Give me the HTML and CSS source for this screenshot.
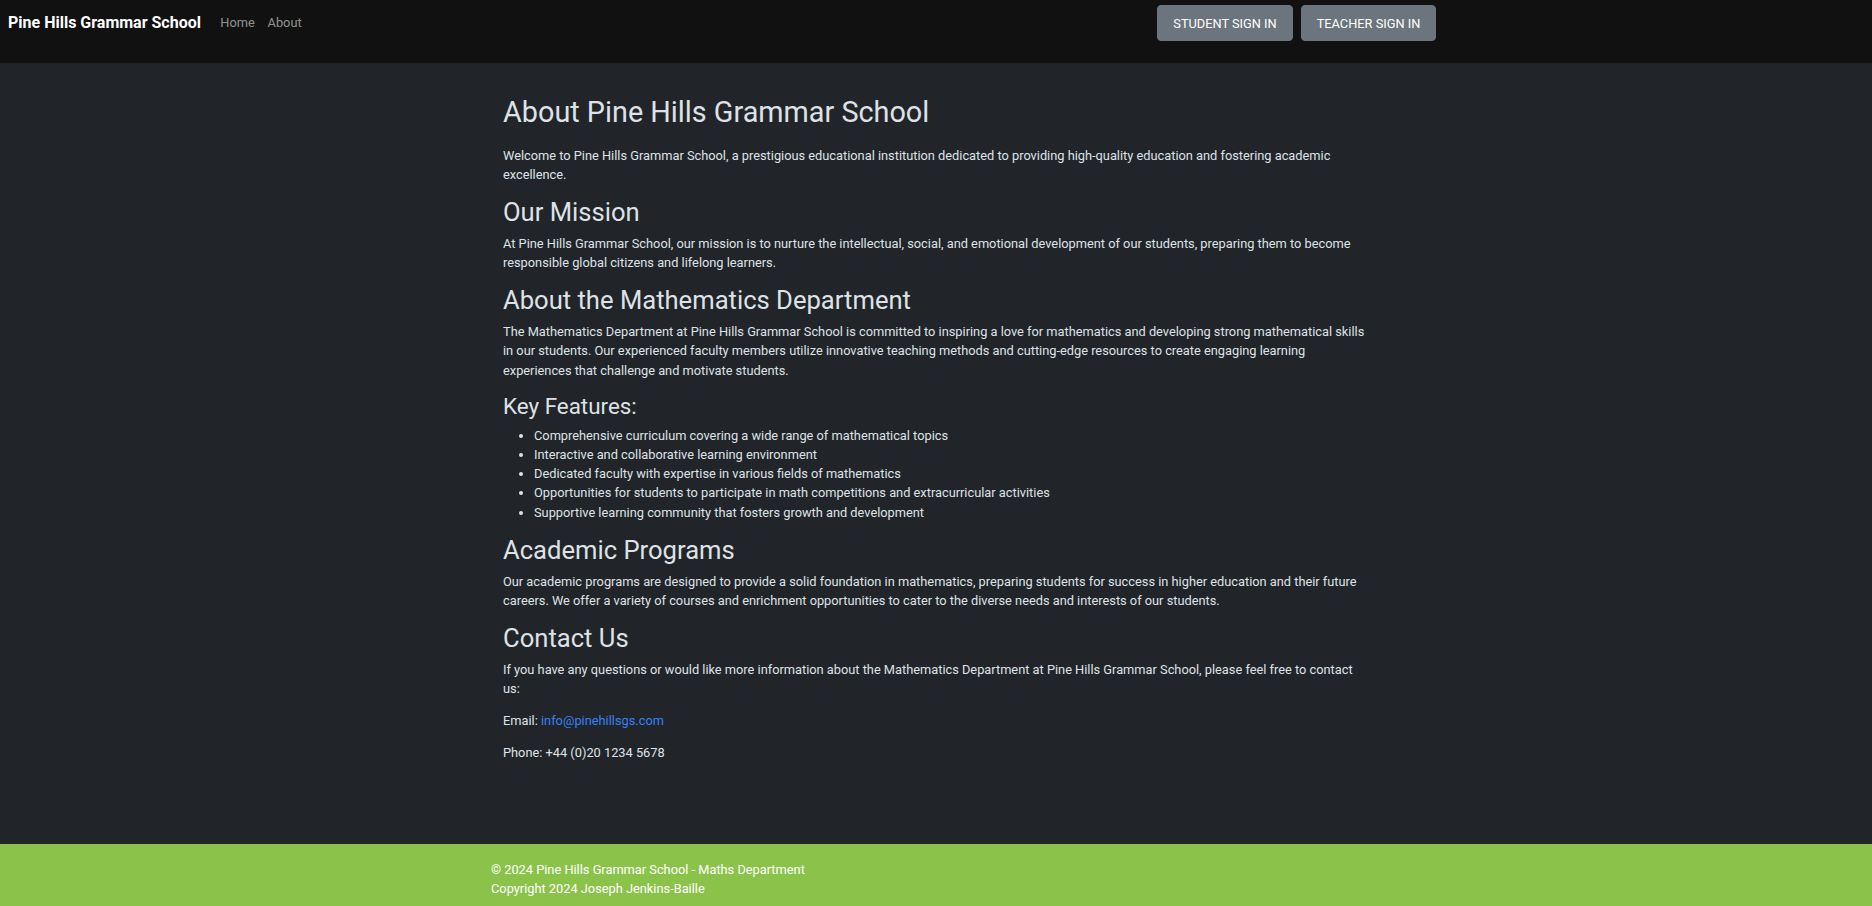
FILE: index.html
```html
<!DOCTYPE html>
<html lang="en">
<head>
<meta charset="utf-8">
<title>Pine Hills Grammar School - Maths Department</title>
<link rel="stylesheet" href="styles.css">
</head>
<body>
<nav class="navbar">
  <div class="nav-left">
    <a class="brand" href="#">Pine Hills Grammar School</a>
    <a class="nav-link" href="#">Home</a>
    <a class="nav-link" href="#">About</a>
  </div>
  <div class="nav-actions">
    <button class="btn">STUDENT SIGN IN</button>
    <button class="btn">TEACHER SIGN IN</button>
  </div>
</nav>
<main class="main">
  <div class="content">
    <h1 class="title">About Pine Hills Grammar School</h1>
    <p>Welcome to Pine Hills Grammar School, a prestigious educational institution dedicated to providing high-quality education and fostering academic excellence.</p>
    <h2>Our Mission</h2>
    <p>At Pine Hills Grammar School, our mission is to nurture the intellectual, social, and emotional development of our students, preparing them to become responsible global citizens and lifelong learners.</p>
    <h2>About the Mathematics Department</h2>
    <p>The Mathematics Department at Pine Hills Grammar School is committed to inspiring a love for mathematics and developing strong mathematical skills in our students. Our experienced faculty members utilize innovative teaching methods and cutting-edge resources to create engaging learning experiences that challenge and motivate students.</p>
    <h3>Key Features:</h3>
    <ul class="features">
      <li>Comprehensive curriculum covering a wide range of mathematical topics</li>
      <li>Interactive and collaborative learning environment</li>
      <li>Dedicated faculty with expertise in various fields of mathematics</li>
      <li>Opportunities for students to participate in math competitions and extracurricular activities</li>
      <li>Supportive learning community that fosters growth and development</li>
    </ul>
    <h2>Academic Programs</h2>
    <p>Our academic programs are designed to provide a solid foundation in mathematics, preparing students for success in higher education and their future careers. We offer a variety of courses and enrichment opportunities to cater to the diverse needs and interests of our students.</p>
    <h2>Contact Us</h2>
    <p>If you have any questions or would like more information about the Mathematics Department at Pine Hills Grammar School, please feel free to contact us:</p>
    <p>Email: <a class="link" href="#">info@pinehillsgs.com</a></p>
    <p>Phone: +44 (0)20 1234 5678</p>
  </div>
</main>
<footer class="footer">
  <div class="footer-inner">
    <div>&copy; 2024 Pine Hills Grammar School - Maths Department</div>
    <div>Copyright 2024 Joseph Jenkins-Baille</div>
  </div>
</footer>
</body>
</html>
```
FILE: styles.css
```css
* { box-sizing: border-box; }
html, body { margin: 0; padding: 0; }
body {
  font-family: Roboto, "Liberation Sans", sans-serif;
  font-size: 12.8px;
  line-height: 19.2px;
  color: #dee2e6;
  background: #212529;
  min-height: 100vh;
  display: flex;
  flex-direction: column;
}
.navbar {
  background: #111111;
  height: 63px;
  flex-shrink: 0;
  display: flex;
  align-items: flex-start;
  padding: 5px 0 0 8px;
}
.nav-left {
  display: flex;
  align-items: center;
  height: 36px;
}
.brand {
  font-size: 16px;
  font-weight: 700;
  color: #ffffff;
  text-decoration: none;
  margin-right: 13px;
}
.nav-link {
  color: rgba(255, 255, 255, 0.55);
  text-decoration: none;
  padding: 0 6.4px;
  font-size: 12.8px;
}
.nav-actions {
  margin-left: auto;
  margin-right: 436px;
  display: flex;
  gap: 8px;
}
.btn {
  height: 36px;
  padding: 0;
  white-space: nowrap;
  background: #6c757d;
  border: 1px solid #6c757d;
  border-radius: 4px;
  color: #ffffff;
  font-family: Roboto, "Liberation Sans", sans-serif;
  font-size: 12.8px;
  font-weight: 400;
  width: 136px;
}
.btn + .btn { width: 135px; }
.main {
  flex: 1;
  padding: 32px 0 66px;
}
.content {
  width: 866px;
  margin: 0 auto;
}
h1, h2, h3 {
  font-weight: 400;
  line-height: 1.2;
  margin: 0 0 6.4px;
  color: #dee2e6;
}
.title {
  font-size: 28.8px;
  margin-bottom: 16px;
}
h2 { font-size: 25.6px; }
h3 { font-size: 22.4px; }
p { margin: 0 0 12.8px; }
.features {
  margin: 0 0 12.8px;
  padding-left: 31px;
}
.link { color: #3482f6; text-decoration: none; }
.footer {
  background: #8bc34a;
  color: #ffffff;
  height: 62px;
  flex-shrink: 0;
  padding-top: 16px;
}
.footer-inner {
  width: 890px;
  margin: 0 auto;
}
```
